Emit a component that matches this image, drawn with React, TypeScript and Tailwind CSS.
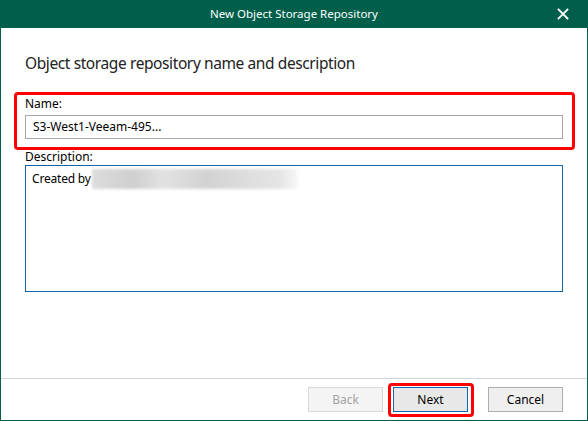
import React from 'react'

const font = { fontFamily: '"Segoe UI", "Noto Sans", "Open Sans", sans-serif' }

function CloseIcon() {
  return (
    <svg width="12" height="12" viewBox="0 0 12 12" fill="none">
      <path d="M1.5 1.5 L10.5 10.5 M10.5 1.5 L1.5 10.5" stroke="white" strokeWidth="1.8" strokeLinecap="square" />
    </svg>
  )
}

export default function App() {
  return (
    <div
      className="relative flex h-[421px] w-[588px] flex-col border-x border-b border-[#005f4b] bg-white text-[12px] text-black"
      style={font}
    >
      <div className="relative -mx-px flex h-7 shrink-0 items-center justify-center bg-[#005f4b] text-[11.5px] text-white">
        <span>New Object Storage Repository</span>
        <button className="absolute right-[19px] top-[8px] flex h-3 w-3 items-center justify-center">
          <CloseIcon />
        </button>
      </div>

      <div className="relative flex flex-1 flex-col px-6">
        <h1 className="pt-[23px] text-[15.5px] leading-6 tracking-[-0.4px] text-[#222]">
          Object storage repository name and description
        </h1>

        <label className="mt-[21px] block leading-4">Name:</label>
        <div className="mt-[3px] flex h-6 items-center border border-[#a8a8a8] px-[7px] text-[12px]">
          S3-West1-Veeam-495...
        </div>

        <label className="mt-[10px] block leading-4">Description:</label>
        <div className="h-[127px] border border-[#1764a8] px-[6px] pt-[3px]">
          <div className="flex items-center leading-5">
            <span className="tracking-[-0.2px]">Created by</span>
            <span className="ml-px inline-block h-[20px] w-[206px] bg-[linear-gradient(90deg,#dcdcdc,#cfcfcf_20%,#e2e2e2_35%,#d2d2d2_55%,#dddddd_75%,#e6e6e6_92%,#f8f8f8)] blur-[1.5px]" />
          </div>
        </div>

        {/* highlight around Name field */}
        <div className="pointer-events-none absolute left-[13px] top-[64px] h-[58px] w-[561px] rounded-[4px] border-[3px] border-[#ff0000]" />
      </div>

      <div className="relative flex h-[42px] shrink-0 items-center justify-end border-t border-[#d4d4d4] pr-6">
        <button className="h-[25px] w-[75px] border border-[#d9d9d9] bg-[#f4f4f4] text-[#a3a3a3]">Back</button>
        <button className="ml-[10px] h-[25px] w-[75px] border border-[#1466ac] bg-[#e8e8e8] text-black">Next</button>
        <button className="ml-5 h-[25px] w-[75px] border border-[#adadad] bg-[#efefef] text-black">Cancel</button>

        {/* highlight around Next button */}
        <div className="pointer-events-none absolute left-[387px] top-[4px] h-[34px] w-[86px] rounded-[4px] border-[3px] border-[#ff0000]" />
      </div>
    </div>
  )
}
